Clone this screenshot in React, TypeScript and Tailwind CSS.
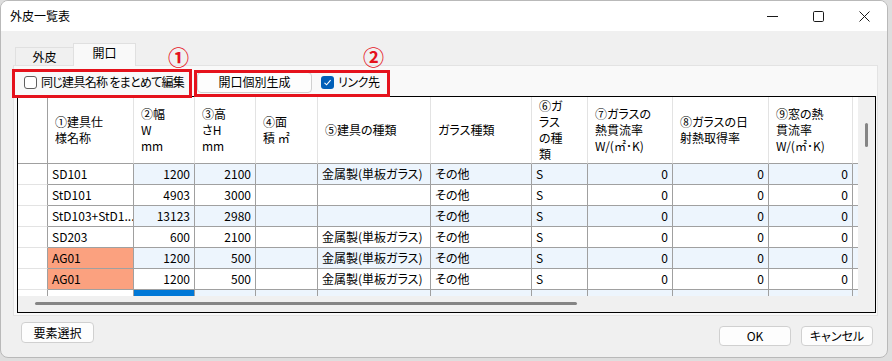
import { ReactNode } from 'react'

type Col = {
  w: string
  head: string[]
  right?: boolean
}

const cols: Col[] = [
  { w: 'w-[86px]', head: ['①建具仕', '様名称'] },
  { w: 'w-[61px]', head: ['②幅', 'W', 'mm'], right: true },
  { w: 'w-[61px]', head: ['③高', 'さH', 'mm'], right: true },
  { w: 'w-[62px]', head: ['④面', '積 ㎡'], right: true },
  { w: 'w-[113px]', head: ['⑤建具の種類'] },
  { w: 'w-[101px]', head: ['ガラス種類'] },
  { w: 'w-[56px]', head: ['⑥ガ', 'ラス', 'の種', '類'] },
  { w: 'w-[85px]', head: ['⑦ガラスの', '熱貫流率', 'W/(㎡･K)'], right: true },
  { w: 'w-[96px]', head: ['⑧ガラスの日', '射熱取得率'], right: true },
  { w: 'w-[84px]', head: ['⑨窓の熱', '貫流率', 'W/(㎡･K)'], right: true },
]

const metal = '金属製(単板ガラス)'

const rows: { cells: string[]; orange?: boolean }[] = [
  { cells: ['SD101', '1200', '2100', '', metal, 'その他', 'S', '0', '0', '0'] },
  { cells: ['StD101', '4903', '3000', '', '', 'その他', 'S', '0', '0', '0'] },
  { cells: ['StD103+StD1...', '13123', '2980', '', '', 'その他', 'S', '0', '0', '0'] },
  { cells: ['SD203', '600', '2100', '', metal, 'その他', 'S', '0', '0', '0'] },
  { cells: ['AG01', '1200', '500', '', metal, 'その他', 'S', '0', '0', '0'], orange: true },
  { cells: ['AG01', '1200', '500', '', metal, 'その他', 'S', '0', '0', '0'], orange: true },
]

function Checkbox({ checked }: { checked?: boolean }) {
  if (checked) {
    return (
      <span className="flex h-[13px] w-[13px] items-center justify-center rounded-[3px] bg-[#005fb8]">
        <svg width="9" height="9" viewBox="0 0 9 9" fill="none">
          <path d="M1.5 4.8 L3.6 6.8 L7.6 2.2" stroke="white" strokeWidth="1.1" />
        </svg>
      </span>
    )
  }
  return <span className="h-[13px] w-[13px] rounded-[3px] border border-[#5f5f5f] bg-white" />
}

function Button({ children, className }: { children: ReactNode; className: string }) {
  return (
    <div
      className={`flex items-center justify-center rounded-[4px] border border-[#d0d0d0] bg-[#fdfdfd] text-[12px] text-black ${className}`}
    >
      {children}
    </div>
  )
}

function HeaderRow() {
  return (
    <div className="flex h-[67px] bg-white">
      <div className="h-full w-[30px] shrink-0 border-r border-b border-r-[#a0a0a0] border-b-[#a0a0a0]" />
      {cols.map((c, i) => (
        <div
          key={i}
          className={`${c.w} flex h-full shrink-0 flex-col justify-center border-r border-b border-r-[#e3e3e3] border-b-[#a0a0a0] pl-[7px] leading-[16px]`}
        >
          {c.head.map((line, j) => (
            <span key={j} className="whitespace-nowrap">
              {line}
            </span>
          ))}
        </div>
      ))}
      <div className="h-full w-[5px] shrink-0 border-b border-[#a0a0a0]" />
    </div>
  )
}

function DataRow({ cells, orange, index }: { cells: string[]; orange?: boolean; index: number }) {
  const tint = index % 2 === 0 ? 'bg-[#edf5fd]' : 'bg-white'
  return (
    <div className="flex h-[21px]">
      <div className="h-full w-[30px] shrink-0 border-r border-b border-r-[#a0a0a0] border-b-[#e3e3e3] bg-white" />
      {cols.map((c, i) => {
        const bg = i === 0 ? (orange ? 'bg-[#fba17f]' : 'bg-white') : tint
        return (
          <div
            key={i}
            className={`${c.w} ${bg} flex h-full shrink-0 items-center overflow-hidden border-r border-b border-[#a0a0a0] px-[4px] leading-none whitespace-nowrap ${
              c.right ? 'justify-end' : 'justify-start'
            }`}
          >
            {cells[i]}
          </div>
        )
      })}
      <div className={`h-full w-[5px] shrink-0 border-b border-[#a0a0a0] ${tint}`} />
    </div>
  )
}

function PartialRow() {
  return (
    <div className="flex h-[21px]">
      <div className="h-full w-[30px] shrink-0 border-r border-[#a0a0a0] bg-white" />
      {cols.map((c, i) => (
        <div
          key={i}
          className={`${c.w} h-full shrink-0 border-r border-[#a0a0a0] ${
            i === 0 ? 'bg-white' : i === 1 ? 'bg-[#0078d7]' : 'bg-[#edf5fd]'
          }`}
        />
      ))}
      <div className="h-full w-[5px] shrink-0 bg-[#edf5fd]" />
    </div>
  )
}

export default function App() {
  return (
    <div className="h-[361px] w-[892px] overflow-hidden bg-[#dedede] font-['Noto_Sans_CJK_JP','Noto_Sans',sans-serif] text-[12px] text-black [font-feature-settings:'palt']">
      <div className="relative flex h-[358px] w-[888px] flex-col overflow-hidden rounded-[8px] border border-[#b9b9b9] bg-[#f0f0f0]">
        {/* Title bar */}
        <div className="flex h-[30px] shrink-0 items-center bg-white">
          <span className="pl-[9px] text-[12px]">外皮一覧表</span>
          <div className="ml-auto flex items-center">
            <div className="flex h-[30px] w-[46px] items-center justify-center">
              <svg width="11" height="11" viewBox="0 0 11 11">
                <path d="M0 5.5 H11" stroke="#1a1a1a" strokeWidth="1" />
              </svg>
            </div>
            <div className="flex h-[30px] w-[46px] items-center justify-center">
              <svg width="11" height="11" viewBox="0 0 11 11" fill="none">
                <rect x="0.5" y="0.5" width="10" height="10" rx="1.2" stroke="#1a1a1a" strokeWidth="1" />
              </svg>
            </div>
            <div className="flex h-[30px] w-[46px] items-center justify-center">
              <svg width="11" height="11" viewBox="0 0 11 11">
                <path d="M0.5 0.5 L10.5 10.5 M10.5 0.5 L0.5 10.5" stroke="#1a1a1a" strokeWidth="1" />
              </svg>
            </div>
          </div>
        </div>

        {/* Tabs */}
        <div className="mt-[12px] flex h-[22px] items-end pl-[14px]">
          <div className="flex h-[18px] w-[58px] items-center justify-center border-t border-l border-[#e0e0e0] bg-[#f0f0f0]">
            外皮
          </div>
          <div className="relative z-10 -mb-px flex h-[23px] w-[63px] items-center justify-center border-t border-r border-l border-[#e0e0e0] bg-[#f9f9f9] pb-[4px]">
            開口
          </div>
        </div>

        {/* Tab panel */}
        <div className="ml-[12px] flex h-[251px] w-[865px] flex-col border border-[#e3e3e3] bg-[#f9f9f9]">
          <div className="flex h-[30px] items-center pt-[2px]">
            <div className="flex w-[183px] items-center gap-[4px] pl-[10px]">
              <Checkbox />
              <span className="whitespace-nowrap tracking-[-0.7px]">同じ建具名称 をまとめて編集</span>
            </div>
            <Button className="h-[21px] w-[115px]">開口個別生成</Button>
            <div className="ml-[9px] flex items-center gap-[4px]">
              <Checkbox checked />
              <span className="tracking-[-0.4px]">リンク先</span>
            </div>
          </div>

          {/* Grid */}
          <div className="ml-[3px] flex h-[217px] w-[859px] border border-black bg-white">
            <div className="flex w-[840px] flex-col">
              <div className="h-[199px] overflow-hidden">
                <HeaderRow />
                {rows.map((r, i) => (
                  <DataRow key={i} cells={r.cells} orange={r.orange} index={i} />
                ))}
                <PartialRow />
              </div>
              <div className="h-[16px] bg-[#f0f0f0] pt-[6px] pl-[17px]">
                <div className="h-[3px] w-[542px] rounded-full bg-[#858585]" />
              </div>
            </div>
            <div className="flex flex-1 justify-center bg-[#f0f0f0] pt-[26px]">
              <div className="h-[24px] w-[3px] rounded-full bg-[#858585]" />
            </div>
          </div>
        </div>

        {/* Bottom buttons */}
        <div className="mt-[6px] flex pl-[20px]">
          <Button className="h-[21px] w-[73px]">要素選択</Button>
          <div className="ml-auto mt-[4px] mr-[14px] flex gap-[10px]">
            <Button className="h-[20px] w-[72px]">OK</Button>
            <Button className="h-[20px] w-[72px]">キャンセル</Button>
          </div>
        </div>

        {/* Annotations */}
        <div className="absolute top-[68px] left-[11px] h-[29px] w-[180px] border-[3px] border-[#e5121c]" />
        <div className="absolute top-[69px] left-[193px] h-[27px] w-[196px] border-[3px] border-[#e5121c]" />
        <span className="absolute top-[45px] left-[167px] text-[21px] leading-none font-bold text-[#e5121c]">①</span>
        <span className="absolute top-[45px] left-[362px] text-[21px] leading-none font-bold text-[#e5121c]">②</span>
      </div>
    </div>
  )
}
